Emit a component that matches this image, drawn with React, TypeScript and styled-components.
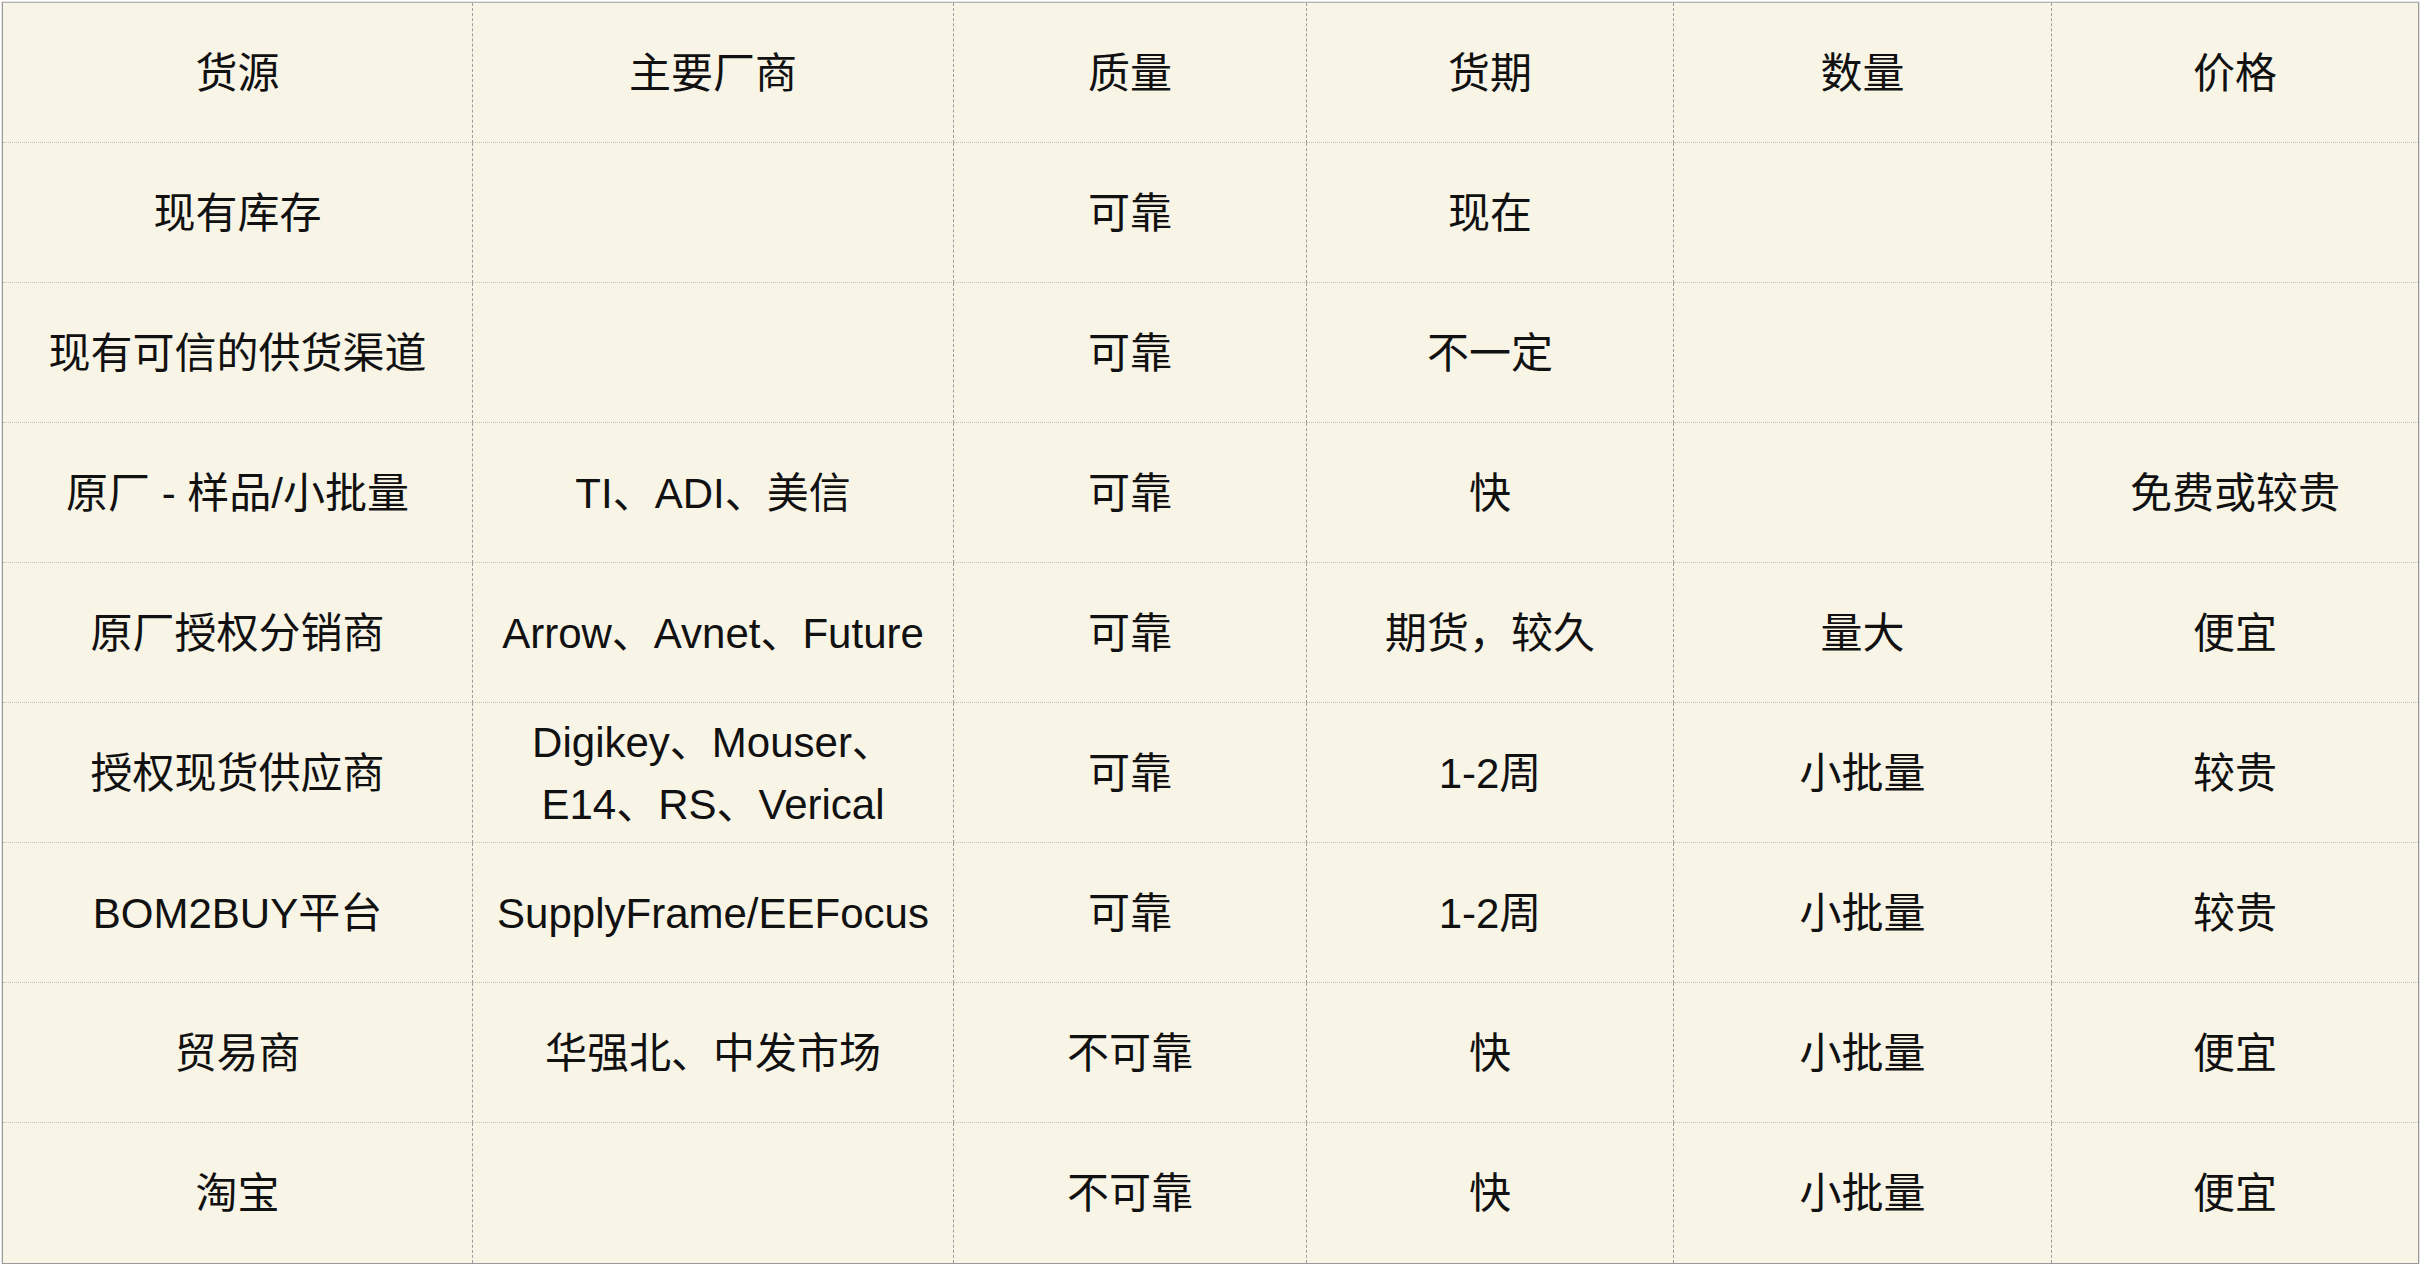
import styled, { createGlobalStyle } from 'styled-components';

const GlobalStyle = createGlobalStyle`
  html, body {
    margin: 0;
    padding: 0;
    background: #ffffff;
  }
  body {
    font-family: "Liberation Sans", "Noto Sans CJK SC", sans-serif;
  }
`;

const columns = ['货源', '主要厂商', '质量', '货期', '数量', '价格'];

const rows: string[][] = [
  ['现有库存', '', '可靠', '现在', '', ''],
  ['现有可信的供货渠道', '', '可靠', '不一定', '', ''],
  ['原厂 - 样品/小批量', 'TI、ADI、美信', '可靠', '快', '', '免费或较贵'],
  ['原厂授权分销商', 'Arrow、Avnet、Future', '可靠', '期货，较久', '量大', '便宜'],
  ['授权现货供应商', 'Digikey、Mouser、\nE14、RS、Verical', '可靠', '1-2周', '小批量', '较贵'],
  ['BOM2BUY平台', 'SupplyFrame/EEFocus', '可靠', '1-2周', '小批量', '较贵'],
  ['贸易商', '华强北、中发市场', '不可靠', '快', '小批量', '便宜'],
  ['淘宝', '', '不可靠', '快', '小批量', '便宜'],
];

const App = () => {
  const all = [columns, ...rows];
  return (
    <Page>
      <GlobalStyle />
      <Table>
        {all.map((row, r) =>
          row.map((text, c) => (
            <Cell key={`${r}-${c}`} $lastRow={r === all.length - 1} $lastCol={c === row.length - 1}>
              {text.split('\n').map((line, i) => (
                <Line key={i}>{line}</Line>
              ))}
            </Cell>
          ))
        )}
      </Table>
    </Page>
  );
};

const Page = styled.div`
  padding: 2px 0 0 2px;
  background: #ffffff;
`;

const Table = styled.div`
  display: grid;
  grid-template-columns: 470px 481px 353px 367px 378px 366px;
  grid-auto-rows: 140px;
  width: max-content;
  background-color: #f8f5e7;
  border: 1px solid #9a9a9a;
  border-top-color: #b4b4b4;
  box-shadow: 0 0 0 0.5px #c8c8c8;
`;

const Cell = styled.div<{ $lastRow: boolean; $lastCol: boolean }>`
  display: flex;
  flex-direction: column;
  justify-content: center;
  align-items: center;
  padding-top: 2px;
  text-align: center;
  font-size: 42px;
  line-height: 62px;
  color: #111111;
  border-right: ${({ $lastCol }) => ($lastCol ? 'none' : '1px dashed #9c9c9c')};
  border-bottom: ${({ $lastRow }) => ($lastRow ? 'none' : '1px dotted #bdbdbd')};
`;

const Line = styled.span`
  display: block;
  white-space: nowrap;
`;

export default App;
